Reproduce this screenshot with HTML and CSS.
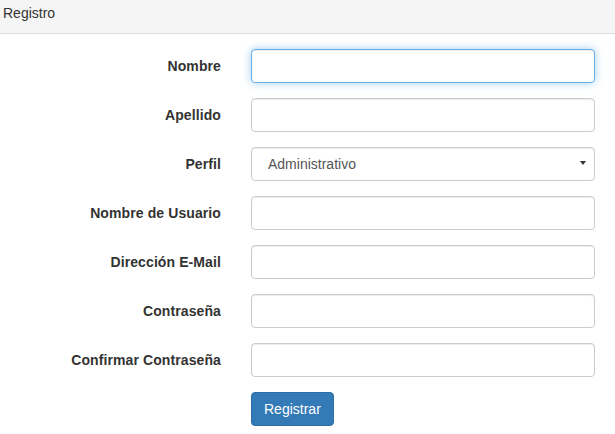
FILE: index.html
```html
<!DOCTYPE html>
<html lang="es">
<head>
<meta charset="utf-8">
<title>Registro</title>
<link rel="stylesheet" href="styles.css">
</head>
<body>
<div class="panel">
  <div class="panel-heading">Registro</div>
  <form class="panel-body">
    <div class="form-group">
      <label class="control-label" for="nombre">Nombre</label>
      <input class="form-control focused" id="nombre" type="text">
    </div>
    <div class="form-group">
      <label class="control-label" for="apellido">Apellido</label>
      <input class="form-control" id="apellido" type="text">
    </div>
    <div class="form-group">
      <label class="control-label" for="perfil">Perfil</label>
      <div class="select-wrap">
        <select class="form-control select" id="perfil">
          <option>Administrativo</option>
        </select>
        <span class="caret"></span>
      </div>
    </div>
    <div class="form-group">
      <label class="control-label" for="usuario">Nombre de Usuario</label>
      <input class="form-control" id="usuario" type="text">
    </div>
    <div class="form-group">
      <label class="control-label" for="email">Dirección E-Mail</label>
      <input class="form-control" id="email" type="email">
    </div>
    <div class="form-group">
      <label class="control-label" for="pass">Contraseña</label>
      <input class="form-control" id="pass" type="password">
    </div>
    <div class="form-group">
      <label class="control-label" for="pass2">Confirmar Contraseña</label>
      <input class="form-control" id="pass2" type="password">
    </div>
    <div class="form-group">
      <span></span>
      <div><button class="btn" type="submit">Registrar</button></div>
    </div>
  </form>
</div>
</body>
</html>
```
FILE: styles.css
```css
* { box-sizing: border-box; }
html, body {
  margin: 0;
  padding: 0;
  background: #fff;
}
body {
  font-family: "Liberation Sans", Arial, Helvetica, sans-serif;
  font-size: 14px;
  line-height: 20px;
  color: #333;
  width: 615px;
}
.panel-heading {
  background: #f5f5f5;
  border-bottom: 1px solid #ddd;
  padding: 3px 3px 10px 3px;
  line-height: 20px;
  color: #333;
}
.panel-body {
  margin: 0;
  padding: 15px 20px 0 0;
}
.form-group {
  display: grid;
  grid-template-columns: 221px 1fr;
  column-gap: 30px;
  margin-bottom: 15px;
}
.control-label {
  text-align: right;
  font-weight: bold;
  padding-top: 7px;
  line-height: 20px;
  letter-spacing: 0.1px;
}
.form-control {
  display: block;
  width: 100%;
  height: 34px;
  padding: 6px 12px;
  font-family: inherit;
  font-size: 14px;
  line-height: 20px;
  color: #555;
  background: #fff;
  border: 1px solid #ccc;
  border-radius: 4px;
  box-shadow: inset 0 1px 1px rgba(0,0,0,.075);
  outline: none;
}
.form-control.focused {
  border-color: #66afe9;
  box-shadow: inset 0 1px 1px rgba(0,0,0,.075), 0 0 8px rgba(102,175,233,.6);
}
.select-wrap {
  position: relative;
}
.select {
  -webkit-appearance: none;
  appearance: none;
  padding-left: 16px;
}
.caret {
  position: absolute;
  right: 9px;
  top: 14px;
  width: 0;
  height: 0;
  border-left: 3px solid transparent;
  border-right: 3px solid transparent;
  border-top: 4px solid #333;
  pointer-events: none;
}
.btn {
  display: inline-block;
  height: 34px;
  padding: 6px 12px;
  font-family: inherit;
  font-size: 14px;
  line-height: 20px;
  color: #fff;
  background: #337ab7;
  border: 1px solid #2e6da4;
  border-radius: 4px;
  cursor: pointer;
}
```
